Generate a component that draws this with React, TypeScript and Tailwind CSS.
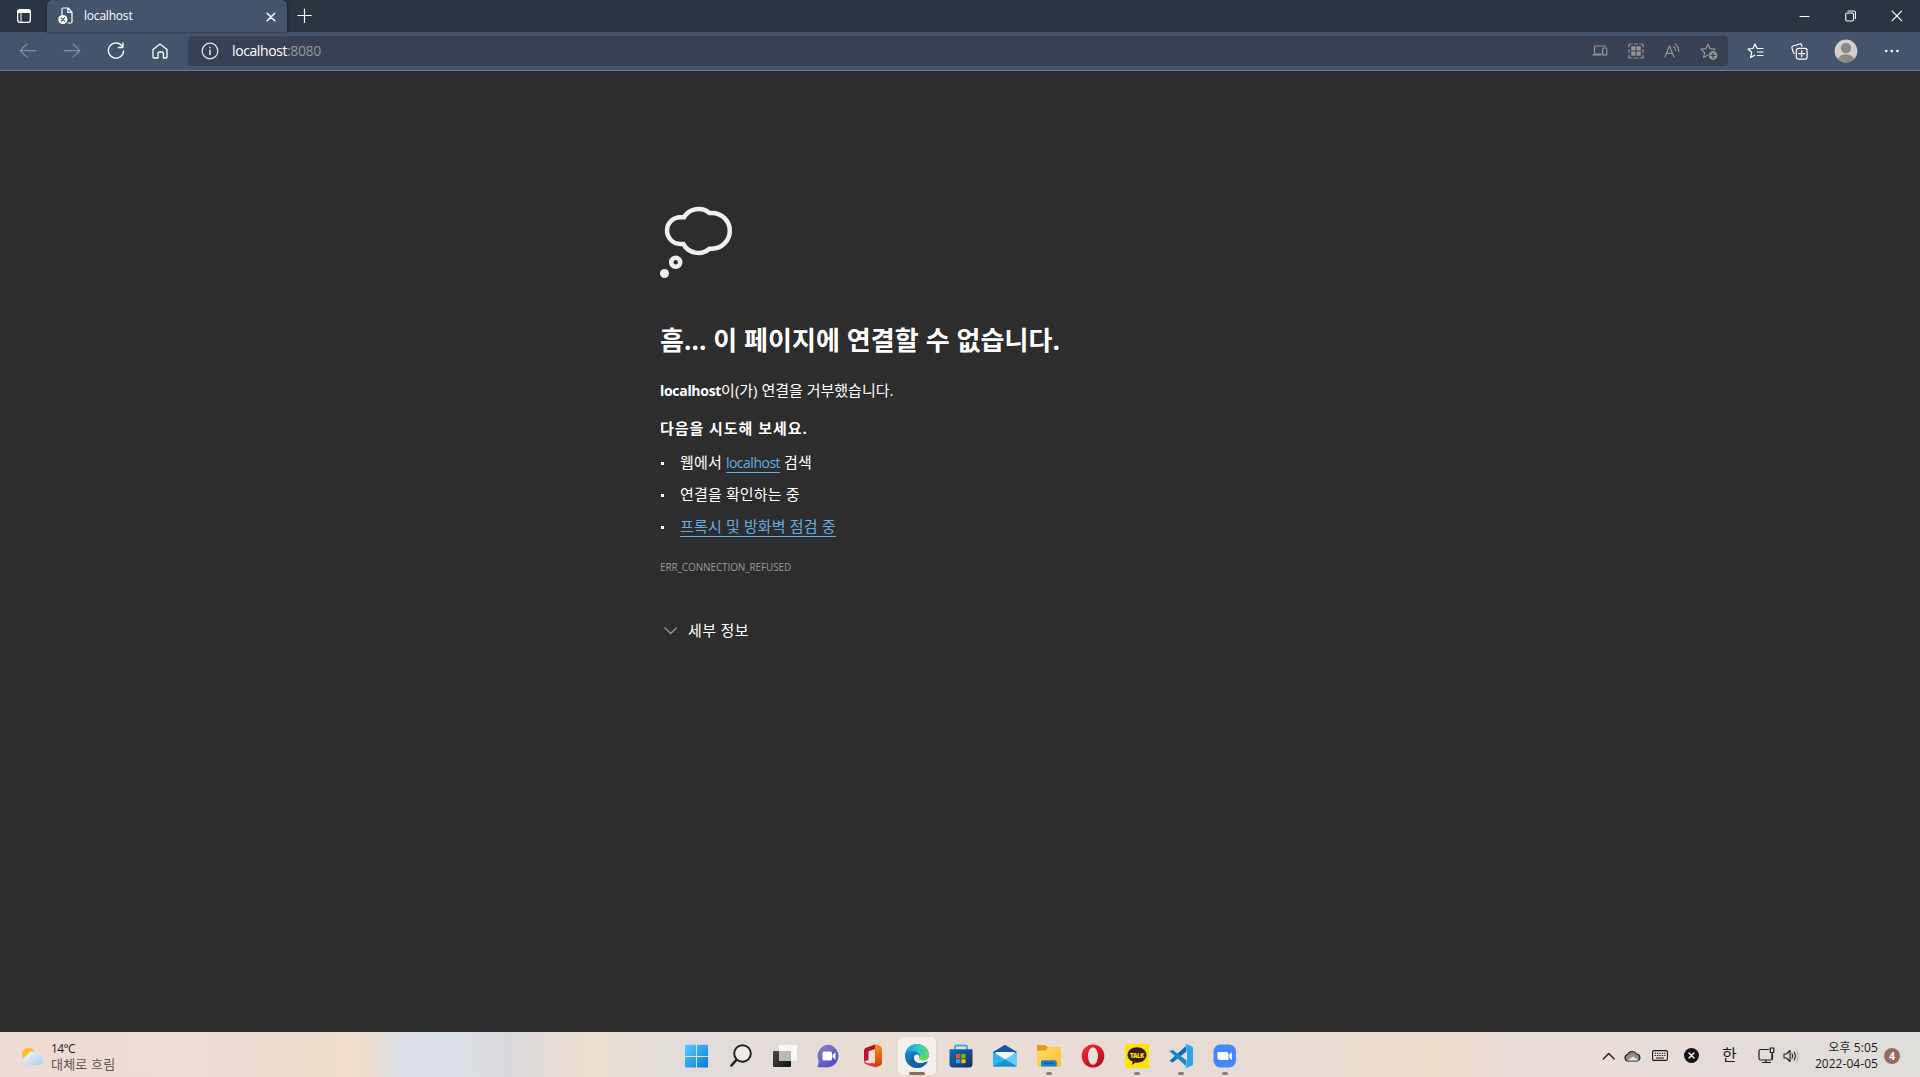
import React from "react";

type SvgProps = {
  w: number;
  h: number;
  className?: string;
  sw?: number;
  children: React.ReactNode;
};

function Icon({ w, h, className = "", sw = 1.2, children }: SvgProps) {
  return (
    <svg
      width={w}
      height={h}
      viewBox={`0 0 ${w} ${h}`}
      fill="none"
      stroke="currentColor"
      strokeWidth={sw}
      strokeLinecap="round"
      strokeLinejoin="round"
      className={`block shrink-0 ${className}`}
    >
      {children}
    </svg>
  );
}

const UI = "font-['Open_Sans','Noto_Sans_CJK_KR',sans-serif]";
const STAR = "M8 1.2 L10.1 5.7 L15 6.2 L11.3 9.5 L12.4 14.6 L8 12 L3.6 14.6 L4.7 9.5 L1 6.2 L5.9 5.7 Z";

function TabStrip() {
  return (
    <div className="flex h-8 bg-[#2b3441] text-white">
      <Icon w={14} h={14} className="ml-[17px] mt-[9px]" sw={1.3}>
        <rect x="0.7" y="0.7" width="12.6" height="12.6" rx="2" />
        <path d="M1 2.5h12" strokeWidth="3" />
        <path d="M4 4v9" strokeWidth="1" />
      </Icon>
      <div className="ml-4 flex h-8 w-60 rounded-t-[5px] bg-[#44546a] shadow-[0_0_3px_rgba(0,0,0,0.6)]">
        <Icon w={16} h={18} className="ml-[11px] mt-[7px]" sw={1.2}>
          <path d="M4 8V2.2Q4 1 5.2 1H10l4 4.2v9.6q0 1.2-1.2 1.2H10M9.8 1v4.4H14" />
          <circle cx="4.8" cy="12.5" r="4.6" fill="white" stroke="none" />
          <path d="M3.1 10.8l3.4 3.4M6.5 10.8l-3.4 3.4" stroke="#44546a" />
        </Icon>
        <span className="ml-[10px] mt-[6px] w-[170px] text-[12px] leading-5 tracking-[-0.2px]">localhost</span>
        <Icon w={10} h={10} className="ml-[12px] mt-[12px]" sw={1.5}>
          <path d="M1.2 1.2l7.6 7.6M8.8 1.2L1.2 8.8" />
        </Icon>
      </div>
      <Icon w={16} h={16} className="ml-[10px] mt-[8px]" sw={1.2}>
        <path d="M7.5 1v13.5M0.8 7.5h13.5" />
      </Icon>
      <div className="ml-auto flex">
        <Icon w={12} h={12} className="mt-[10px]" sw={1.1}>
          <path d="M1 6.5h9" />
        </Icon>
        <Icon w={12} h={12} className="ml-[34px] mt-[10px]" sw={1.1}>
          <rect x="0.7" y="3" width="7.8" height="8" rx="1.5" />
          <path d="M3 1h5.5q2 0 2 2v5.6" />
        </Icon>
        <Icon w={12} h={12} className="ml-[34px] mr-[17px] mt-[10px]" sw={1.2}>
          <path d="M1.2 1.2l9.4 9.4M10.6 1.2l-9.4 9.4" />
        </Icon>
      </div>
    </div>
  );
}

function Toolbar() {
  return (
    <div className="flex h-[39px] border-b border-[#6b7a8d] bg-[#44546a] pb-[1px] text-white">
      <Icon w={18} h={16} className="ml-[19px] mt-[11px] text-[#8592a3]" sw={1.1}>
        <path d="M1 7.6h16M8 1L1 7.6L8 14.2" />
      </Icon>
      <Icon w={18} h={16} className="ml-[26px] mt-[11px] text-[#8592a3]" sw={1.1}>
        <path d="M1 7.6h16M10 1l7 6.6l-7 6.6" />
      </Icon>
      <Icon w={18} h={18} className="ml-[26px] mt-[10px]" sw={1.3}>
        <path d="M15.4 4.4A7.6 7.6 0 1 0 16.6 9M16 1v4.5h-4.6" />
      </Icon>
      <Icon w={16} h={16} className="ml-[27px] mt-[11px]" sw={1.3}>
        <path d="M1 6.6L8 1l7 5.6V14q0 1-1 1h-2.6v-4.5q0-1.5-1.5-1.5H7.500Q6 9 6 10.500V15H2Q1 15 1 14Z" />
      </Icon>
      <div className="ml-[20px] mt-[4px] flex h-[30px] w-[1540px] rounded-[4px] bg-[#364253]">
        <Icon w={18} h={18} className="ml-[13px] mt-[6px] text-[#e3e6ea]" sw={1.2}>
          <circle cx="9" cy="9" r="7.8" />
          <path d="M9 8.2v4.2M9 5.4v0.3" strokeWidth="1.6" />
        </Icon>
        <span className="ml-[13px] mt-[5px] text-[14px] leading-5 tracking-[-0.4px]">
          localhost<span className="text-[#959595]">:8080</span>
        </span>
        <div className="ml-auto flex text-[#959595]">
          <Icon w={16} h={12} className="mt-[9px]" sw={1.2}>
            <path d="M2.5 8V1.8Q2.5 1 3.3 1H13.5M0.8 10h8" />
            <rect x="10.6" y="3" width="4.2" height="7.2" rx="1" />
            <path d="M2 9.2h7" strokeWidth="1.5" />
          </Icon>
          <Icon w={16} h={16} className="ml-[20px] mt-[7px]" sw={1.2}>
            <path d="M1 4V1h3M12 1h3v3M15 12v3h-3M4 15H1v-3M6.500 1h3M6.500 15h3M1 6.500v3M15 6.500v3" />
            <path d="M3.200 3.200h4.300v4.300h-4.300zM8.500 3.200h4.300v4.300h-4.300zM3.200 8.500h4.300v4.300h-4.300zM8.500 8.500h4.300v4.300h-4.300z" fill="currentColor" stroke="none" />
          </Icon>
          <Icon w={16} h={16} className="ml-[20px] mt-[7px]" sw={1.2}>
            <path d="M1 14L5.500 3L10 14M2.600 10.300h5.800M9.500 3.500q2 1.300 2 4M11 1q4 2.500 3.600 7.500" />
          </Icon>
          <Icon w={18} h={17} className="ml-[20px] mr-[10px] mt-[7px]" sw={1.2}>
            <path d={STAR} />
            <circle cx="13" cy="12.5" r="5.2" fill="#364253" stroke="none" />
            <circle cx="13" cy="12.5" r="4.4" fill="currentColor" stroke="none" />
            <path d="M13 10.300v4.400M10.800 12.500h4.400" stroke="#364253" />
          </Icon>
        </div>
      </div>
      <Icon w={17} h={17} className="ml-[19px] mt-[11px]" sw={1.2}>
        <path d="M10.200 5.500L8 1L5.900 5.500L1 6L4.700 9.300L3.600 14.600L7.600 12.300M10.500 5.500h5.500M10.500 9h5.500M10.500 12.500h5.500" />
      </Icon>
      <Icon w={17} h={17} className="ml-[27px] mt-[11px]" sw={1.2}>
        <path d="M3.500 10.500Q2.500 10.500 2 8.500L0.900 4.800Q0.600 3.400 2 3L8.800 1Q10.200 0.700 10.600 2L11 3.200" />
        <rect x="5.3" y="5.3" width="10.8" height="10.8" rx="2.2" />
        <path d="M10.700 7.700v6M7.700 10.700h6" />
      </Icon>
      <svg width="24" height="24" viewBox="0 0 24 24" className="ml-[26px] mt-[7px] block shrink-0">
        <defs>
          <clipPath id="avatar">
            <circle cx="12" cy="12" r="11.4" />
          </clipPath>
        </defs>
        <circle cx="12" cy="12" r="11.4" fill="#d2d0ce" />
        <g clipPath="url(#avatar)" fill="#8d8985">
          <circle cx="12" cy="9" r="5.2" />
          <ellipse cx="12" cy="20.5" rx="8" ry="5.2" />
        </g>
      </svg>
      <Icon w={16} h={6} className="ml-[26px] mt-[16px]" sw={0}>
        <g fill="white">
          <circle cx="2.2" cy="3" r="1.3" />
          <circle cx="7.8" cy="3" r="1.3" />
          <circle cx="13.4" cy="3" r="1.3" />
        </g>
      </Icon>
    </div>
  );
}

function ErrorPage() {
  return (
    <main className="flex h-[961px] flex-col bg-[#2d2d2d] pl-[660px] pt-[135px] text-[15px] leading-5 text-white">
      <Icon w={72} h={72} className="overflow-visible text-[#efefef]" sw={4.5}>
        <g strokeLinecap="butt" strokeLinejoin="miter">
          <path d="M24 11.300H20.300A13.300 13.300 0 0 0 20.300 37.900H23.300A17 17 0 0 0 49.500 42.700H51.900A17.900 17.900 0 0 0 51.900 6.900H49.500A17 17 0 0 0 24 11.300Z" />
          <circle cx="15.7" cy="56.3" r="4.5" />
        </g>
        <circle cx="4.5" cy="67.5" r="4.5" fill="currentColor" stroke="none" />
      </Icon>
      <h1 className="mt-[42px] h-10 whitespace-nowrap text-[26px] font-bold leading-10 tracking-[0.07px]">
        흠... 이 페이지에 연결할 수 없습니다.
      </h1>
      <p className="mt-[20px] h-5">
        <b className="text-[14px] tracking-[-0.3px]">localhost</b>이(가) 연결을 거부했습니다.
      </p>
      <p className="mt-[18px] h-5 font-bold tracking-[0.95px]">다음을 시도해 보세요.</p>
      <ul className="mt-[14px] flex flex-col gap-3 tracking-[0.15px]">
        <li className="flex h-5 items-center">
          <span className="relative top-px ml-[1px] mr-4 size-[3px] bg-white" />
          <span>
            웹에서{" "}
            <a className="border-b border-[#63ade5] text-[14px] tracking-[-0.5px] text-[#63ade5]">localhost</a> 검색
          </span>
        </li>
        <li className="flex h-5 items-center">
          <span className="relative top-px ml-[1px] mr-4 size-[3px] bg-white" />
          <span>연결을 확인하는 중</span>
        </li>
        <li className="flex h-5 items-center">
          <span className="relative top-px ml-[1px] mr-4 size-[3px] bg-white" />
          <a className="border-b border-[#63ade5] text-[#63ade5]">프록시 및 방화벽 점검 중</a>
        </li>
      </ul>
      <p className="mt-[21px] h-5 text-[10px] tracking-[-0.12px] text-[#9a9a9a]">ERR_CONNECTION_REFUSED</p>
      <div className="mt-[43px] flex h-5">
        <Icon w={14} h={8} className="ml-1 mt-[7px] text-[#9a9a9a]" sw={1.3}>
          <path d="M1 1l5.700 5.500L12.400 1" />
        </Icon>
        <span className="ml-[10px] tracking-[0.35px]">세부 정보</span>
      </div>
    </main>
  );
}

function AppArt({ children }: { children: React.ReactNode }) {
  return (
    <svg width="24" height="24" viewBox="0 0 24 24" className="block">
      {children}
    </svg>
  );
}

const apps: { name: string; running?: boolean; active?: boolean; art: React.ReactNode }[] = [
  {
    name: "start",
    art: (
      <>
        <defs>
          <linearGradient id="win" x1="0" y1="0" x2="24" y2="24" gradientUnits="userSpaceOnUse">
            <stop offset="0" stopColor="#55d0fb" />
            <stop offset="1" stopColor="#0674d6" />
          </linearGradient>
        </defs>
        <path d="M0 1.500q0-.8.8-.8H11V12H0zM12 .700h10.200q.8 0 .8.8V12h-11zM0 13h11v10.500H.8q-.8 0-.8-.8zM12 13h11v9.700q0 .8-.8.8H12z" fill="url(#win)" />
      </>
    ),
  },
  {
    name: "search",
    art: (
      <g fill="none" stroke="#222" strokeLinecap="round">
        <circle cx="13.5" cy="9.5" r="8.3" fill="#eeeae8" strokeWidth="2" />
        <path d="M7.300 16L2.500 21.500" strokeWidth="2.6" />
      </g>
    ),
  },
  {
    name: "taskview",
    art: (
      <>
        <defs>
          <linearGradient id="tv" x1="0" y1="0" x2="1" y2="1">
            <stop offset="0" stopColor="#4a4a48" />
            <stop offset="1" stopColor="#111" />
          </linearGradient>
        </defs>
        <rect x="0" y="7" width="18" height="16" rx="1" fill="url(#tv)" />
        <rect x="6" y="1" width="18" height="16" rx="1" fill="#fafafa" fillOpacity=".9" />
        <rect x="6" y="7" width="12" height="10" fill="#b9b9b9" />
      </>
    ),
  },
  {
    name: "chat",
    art: (
      <>
        <defs>
          <linearGradient id="chat" x1="0" y1="0" x2="0.6" y2="1">
            <stop offset="0" stopColor="#8f83bd" />
            <stop offset="1" stopColor="#4f50c8" />
          </linearGradient>
        </defs>
        <path d="M12 .7A11.300 11.300 0 1 1 8 23.200H1.300Q.4 23.200.700 22.300L1.800 17A11.300 11.300 0 0 1 12 .7Z" fill="url(#chat)" />
        <rect x="5.5" y="7.5" width="9.5" height="9" rx="1.5" fill="white" />
        <path d="M15.500 11l3-2.800v7.600l-3-2.800z" fill="white" />
      </>
    ),
  },
  {
    name: "office",
    art: (
      <>
        <defs>
          <linearGradient id="off" x1="0" y1="0" x2="0" y2="1">
            <stop offset="0" stopColor="#a8141c" />
            <stop offset="0.7" stopColor="#c3153c" />
            <stop offset="1" stopColor="#ee4a78" />
          </linearGradient>
          <linearGradient id="off2" x1="0" y1="0" x2="0" y2="1">
            <stop offset="0" stopColor="#f98a1b" />
            <stop offset="1" stopColor="#d63a07" />
          </linearGradient>
        </defs>
        <path d="M14 .5L5 3.800Q3 4.700 3 6.500V17.500L7.500 16V7.300L14.500 5L20 2.500zM3 17.500L6.500 19.300H14.500V23.500L6 20.800Q3 19.800 3 17.500z" fill="url(#off)" />
        <path d="M14 .5L19.500 2.400Q21 3 21 4.600V19.300Q21 21 19.500 21.500L14 23.500z" fill="url(#off2)" />
      </>
    ),
  },
  {
    name: "edge",
    active: true,
    art: (
      <>
        <defs>
          <linearGradient id="e1" x1="0" y1="0.3" x2="1" y2="0.3">
            <stop offset="0" stopColor="#1795dc" />
            <stop offset="0.5" stopColor="#2fc3cf" />
            <stop offset="1" stopColor="#5fdd58" />
          </linearGradient>
          <linearGradient id="e2" x1="0" y1="0" x2="0.7" y2="1">
            <stop offset="0" stopColor="#1b9de2" />
            <stop offset="1" stopColor="#114a8b" />
          </linearGradient>
        </defs>
        <circle cx="12" cy="12" r="12" fill="url(#e2)" />
        <path d="M.3 10.500C1.500 4 6.500 0 12 0C19 0 24 5 24 10.700C24 14 21.500 16.200 18.300 16.200C15.500 16.200 14 15.200 14.200 14.400C15.500 13 15.300 9.500 11.500 7.900C7 6 2 7 .3 10.500Z" fill="url(#e1)" />
        <path d="M9 13C8.600 18 13 21.500 22.800 17.300L24.500 16V11C24 14.500 21.500 16.200 18.300 16.200C15.500 16.200 14 15.200 14.200 14.400C15 13.300 14.600 11 12.600 10.500C10.500 10.300 9.200 11.300 9 13Z" fill="#f5efeb" />
        <path d="M24 10.700C24 14 21.500 16.200 18.300 16.200C15.500 16.200 14 15.200 14.200 14.400L14.800 12Z" fill="#5ddc62" />
        <path d="M8.900 12.500C8 18 12.500 21.500 22 18C19 23.200 14 24.500 10.500 23.900C5 21.500 5 14.500 8.900 12.500Z" fill="#145ca5" />
      </>
    ),
  },
  {
    name: "store",
    art: (
      <>
        <defs>
          <linearGradient id="st" x1="0" y1="0" x2="1" y2="1">
            <stop offset="0" stopColor="#0b6cba" />
            <stop offset="1" stopColor="#183058" />
          </linearGradient>
        </defs>
        <path d="M6 6V3Q6 1.500 7.500 1.500h9Q18 1.500 18 3v3" fill="none" stroke="#2fb4ea" strokeWidth="1.8" />
        <path d="M0.500 6q0-.8.8-.8h21.400q.8 0 .8.8V20q0 3.500-3.500 3.500h-16Q.5 23.500.5 20z" fill="url(#st)" />
        <path d="M7 10h4.300v4.300H7z" fill="#f25022" />
        <path d="M12.300 10h4.300v4.300h-4.300z" fill="#7fba00" />
        <path d="M7 15.200h4.300v4H7z" fill="#20a4ec" />
        <path d="M12.300 15.200h4.300v4h-4.300z" fill="#ffb900" />
      </>
    ),
  },
  {
    name: "mail",
    art: (
      <>
        <path d="M0 8L12 .7L24 8V12H0z" fill="#1257a0" />
        <path d="M2.500 8h19v5L12 17L2.500 12z" fill="#f3f3f3" />
        <path d="M0 8L12.500 15.500L24 8V22.500H0z" fill="#33b4ee" />
        <path d="M12.500 15.500L24 8V22.500z" fill="#62cdf5" />
        <path d="M0 22.500L12.500 15.500L24 22.500z" fill="#1a8fdc" />
      </>
    ),
  },
  {
    name: "files",
    running: true,
    art: (
      <>
        <defs>
          <linearGradient id="fo" x1="0" y1="0" x2="1" y2="1">
            <stop offset="0" stopColor="#ffdb6f" />
            <stop offset="1" stopColor="#fbbd2c" />
          </linearGradient>
        </defs>
        <path d="M0 2.200Q0 1 1.200 1H8.200L10.500 3H23q1 0 1 1V9H0z" fill="#dc9c15" />
        <path d="M0 6.500H8.500L11 3H23q1 0 1 1V21.500q0 1-1 1H1q-1 0-1-1z" fill="url(#fo)" />
        <path d="M4 22.500V18q0-1.800 1.800-1.800H18q1.800 0 1.800 1.800v4.500z" fill="#1c7fcc" />
        <path d="M8 19.200h8" stroke="#0e5c9f" strokeWidth="1.5" strokeLinecap="round" />
      </>
    ),
  },
  {
    name: "opera",
    art: (
      <>
        <defs>
          <linearGradient id="op" x1="0" y1="0" x2="0.7" y2="1">
            <stop offset="0" stopColor="#ff2a3a" />
            <stop offset="1" stopColor="#b40f1a" />
          </linearGradient>
        </defs>
        <ellipse cx="12" cy="12" rx="11.3" ry="11.5" fill="url(#op)" />
        <ellipse cx="12" cy="12" rx="5" ry="8.8" fill="#ebe0d8" />
      </>
    ),
  },
  {
    name: "talk",
    running: true,
    art: (
      <>
        <path d="M0 0h24v24H0z" fill="#ffe300" />
        <path d="M12 3.300c5.300 0 9.500 3.300 9.500 7.700s-4.200 7.700-9.500 7.700l-1.500-.1L6.800 21l.9-3.400C4.500 16.300 2.500 14 2.500 11c0-4.400 4.200-7.700 9.500-7.700z" fill="#371d1e" />
        <text x="12" y="13.5" textAnchor="middle" fontSize="6" fontWeight="800" fill="#ffe300" textLength="14">
          TALK
        </text>
      </>
    ),
  },
  {
    name: "code",
    running: true,
    art: (
      <>
        <path d="M1.500 16L17.500 1.500V7.500L3.500 18.500L1 17.300Q0 16.700 1.500 16z" fill="#0b6fb8" />
        <path d="M1.500 8L17.500 22.500V16.500L3.500 5.700L1 6.900Q0 7.400 1.500 8z" fill="#1487d0" />
        <path d="M17.500 0L23 2.400Q24 2.900 24 4V20Q24 21.100 23 21.600L17.500 24Q16.500 24 16 23.300Q18 23.500 18 21.500V2.500Q18 .5 16 .7Q16.500 0 17.500 0z" fill="#2aa6ee" />
      </>
    ),
  },
  {
    name: "zoom",
    running: true,
    art: (
      <>
        <rect x="0.5" y="0.5" width="22.5" height="23" rx="7" fill="#4588fb" />
        <path d="M4.500 8h9q2 0 2 2v6H7Q4.500 16 4.500 13.500z" fill="white" />
        <path d="M16.300 10.500L19 8.300v7.600l-2.700-2.100z" fill="white" />
      </>
    ),
  },
];

function Taskbar() {
  return (
    <footer className="flex h-[45px] bg-[linear-gradient(90deg,#eedbd4_0px,#eedcd5_200px,#ecdcd0_290px,#f0decb_343px,#ebded0_370px,#dde0e5_400px,#dbe0e8_445px,#dbd9dd_505px,#e2dbd6_550px,#eddfce_588px,#e5dfd5_630px,#e1dcda_700px,#e4dcd8_780px,#eaddd4_880px,#eaddd5_1020px,#e6dcd5_1180px,#e8dcd2_1320px,#eedccd_1430px,#e7dcd6_1520px,#e9ddd8_1600px,#e3dcd9_1750px,#dfdddb_1920px)] text-[#1b1b1b]">
      <div className="flex w-[675px]">
        <svg width="22" height="21" viewBox="0 0 20 18" className="ml-[22px] mt-[14px] block">
          <defs>
            <linearGradient id="cl" x1="0" y1="0" x2="1" y2="1">
              <stop offset="0" stopColor="#f2f8fd" />
              <stop offset="1" stopColor="#abd0ee" />
            </linearGradient>
          </defs>
          <circle cx="6" cy="7" r="6" fill="#fbbc24" />
          <path d="M5 17A4.500 4.500 0 0 1 4.500 8.200A5.500 5.500 0 0 1 14 6.400A5 5 0 0 1 14.500 17Z" fill="url(#cl)" />
        </svg>
        <div className="ml-[7px] mt-[9px] text-[12px] leading-[15px]">
          <div className="tracking-[-0.6px]">14°C</div>
          <div className="mt-px text-[13px] tracking-[0.2px] text-[#5c5654]">대체로 흐림</div>
        </div>
      </div>
      <div className="flex">
        {apps.map((a) => (
          <div key={a.name} className="flex w-11 flex-col items-center pt-[5px]">
            <div
              className={
                a.active
                  ? "flex h-[38px] w-[38px] flex-col items-center rounded-[4px] bg-[#f5efeb] pt-[7px] shadow-[0_0_1px_rgba(0,0,0,0.2)]"
                  : "flex h-[38px] w-[38px] flex-col items-center pt-[7px]"
              }
            >
              <AppArt>{a.art}</AppArt>
              {a.active && <div className="mt-1 h-[3px] w-4 rounded-full bg-[#966a5a]" />}
              {a.running && <div className="mt-1 h-[3px] w-[6px] rounded-full bg-[#84807d]" />}
            </div>
          </div>
        ))}
      </div>
      <div className="ml-auto flex">
        <Icon w={14} h={8} className="mt-[20px]" sw={1.3}>
          <path d="M1.200 7l5.500-5.500L12.200 7" />
        </Icon>
        <Icon w={17} h={12} className="ml-[8px] mt-[18px]" sw={1.1}>
          <path d="M4 11A3.300 3.300 0 0 1 3.600 4.500A5 5 0 0 1 12.500 4A3.600 3.600 0 0 1 13.500 11Z" fill="#8b8b8b" />
          <path d="M3 10.500L9 6.500L15 10.500Z" fill="#e5e5e5" stroke="none" />
        </Icon>
        <Icon w={16} h={11} className="ml-[11px] mt-[18px]" sw={1.1}>
          <rect x="0.6" y="0.6" width="14.8" height="9.8" rx="1.2" />
          <path d="M3 3.300h10M3 5.500h10" strokeDasharray="0.600 1.800" />
          <path d="M4.500 8h7" />
        </Icon>
        <Icon w={16} h={16} className="ml-[16px] mt-[16px]" sw={1.5}>
          <circle cx="7.5" cy="7.5" r="7.5" fill="#141414" stroke="none" />
          <path d="M5 5l5 5M10 5l-5 5" stroke="#eee" />
        </Icon>
        <span className="ml-[22px] mt-[13px] w-4 text-[16px] leading-5">한</span>
        <Icon w={17} h={17} className="ml-[20px] mt-[15px]" sw={1.2}>
          <path d="M10.500 2.500H2.500Q1 2.500 1 4V11.500Q1 13 2.500 13H13Q14.500 13 14.500 11.500V7M8 13v2.500M4.500 15.500h8" />
          <path d="M12.300 1h3.500v4.500h-3.500zM14 5.500v6" />
        </Icon>
        <Icon w={17} h={14} className="ml-[8px] mt-[17px]" sw={1.1}>
          <path d="M1 5h2.500L7 1.500v11L3.500 9H1Z" />
          <path d="M9 4.800q1.200 2.200 0 4.400M11.200 3q2.300 4 0 8" />
          <path d="M13.500 1.300q3.500 5.700 0 11.400" stroke="#b5b0ad" />
        </Icon>
        <div className="ml-[8px] mt-[8px] w-[70px] whitespace-nowrap text-right text-[12px] leading-[16px]">
          <div className="tracking-[0.1px]">오후 5:05</div>
          <div className="tracking-[0.05px]">2022-04-05</div>
        </div>
        <div className="ml-[6px] mr-5 mt-[16px] flex size-4 items-center justify-center rounded-full bg-[#966a5a] text-[10px] font-bold leading-none text-white">
          4
        </div>
      </div>
    </footer>
  );
}

export default function App() {
  return (
    <div className={`h-[1077px] w-[1920px] overflow-hidden ${UI}`}>
      <TabStrip />
      <Toolbar />
      <ErrorPage />
      <Taskbar />
    </div>
  );
}
